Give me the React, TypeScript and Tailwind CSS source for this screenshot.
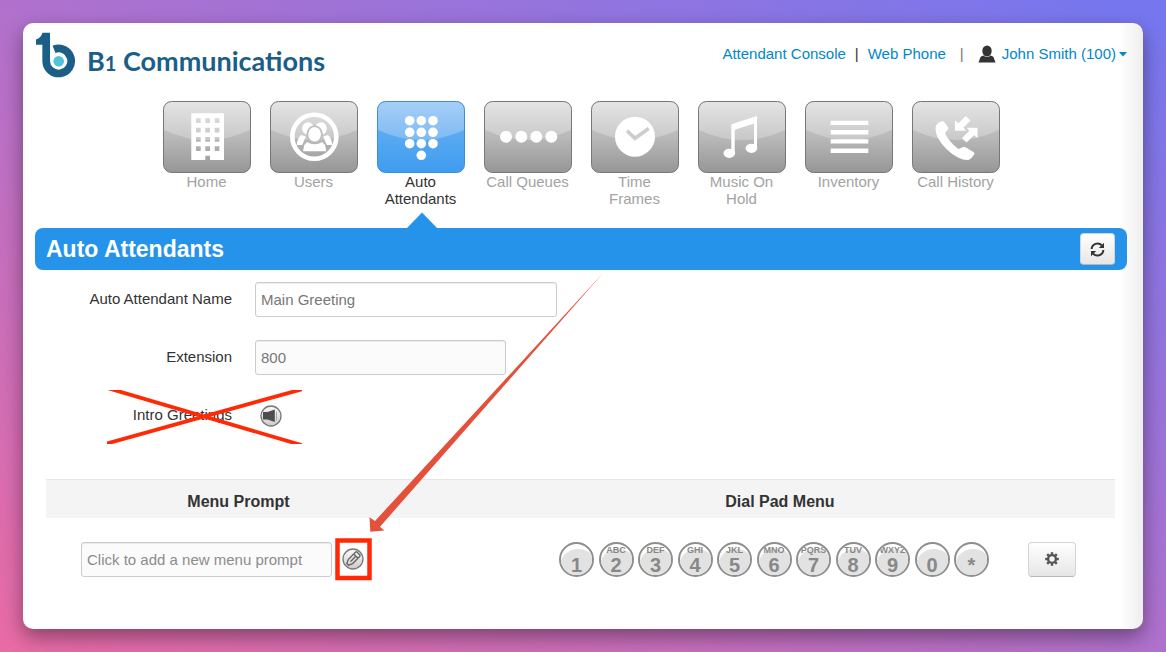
import React from "react";

type NavKey =
  | "home"
  | "users"
  | "attendants"
  | "queues"
  | "frames"
  | "music"
  | "inventory"
  | "history";

const NAV_ITEMS: { key: NavKey; label: string }[] = [
  { key: "home", label: "Home" },
  { key: "users", label: "Users" },
  { key: "attendants", label: "Auto Attendants" },
  { key: "queues", label: "Call Queues" },
  { key: "frames", label: "Time Frames" },
  { key: "music", label: "Music On Hold" },
  { key: "inventory", label: "Inventory" },
  { key: "history", label: "Call History" },
];

const DIAL_KEYS = [
  { digit: "1", letters: "" },
  { digit: "2", letters: "ABC" },
  { digit: "3", letters: "DEF" },
  { digit: "4", letters: "GHI" },
  { digit: "5", letters: "JKL" },
  { digit: "6", letters: "MNO" },
  { digit: "7", letters: "PQRS" },
  { digit: "8", letters: "TUV" },
  { digit: "9", letters: "WXYZ" },
  { digit: "0", letters: "" },
  { digit: "*", letters: "" },
];

const INPUT_CLASS =
  "h-[35px] rounded-[3px] border border-[#cccccc] px-[5px] text-[15px] text-[#777777] placeholder:text-[#8c8c8c] shadow-[inset_0_1px_1px_rgba(0,0,0,0.07)]";

const BUTTON_CLASS =
  "flex items-center justify-center rounded-[4px] border border-[#d5d5d5] border-b-[#b8b8b8] bg-linear-to-b from-white to-[#e6e6e6]";

const windowPath = [17.3, 26.7, 36, 45.3]
  .flatMap((y) => [33, 42.3, 51.7].map((x) => `M${x} ${y}h4.7v4.7h-4.7z`))
  .join("");

const GLYPHS: Record<NavKey, React.ReactNode> = {
  home: (
    <path
      fillRule="evenodd"
      d={`M28.3 12.3H61V59H47V54.7H42.3V59H28.3z${windowPath}`}
    />
  ),
  users: (
    <>
      <circle cx="44.3" cy="35.7" r="22" fill="none" stroke="#fff" strokeWidth="4.6" />
      <ellipse cx="38" cy="27.5" rx="5.8" ry="6.2" />
      <ellipse cx="51" cy="27.5" rx="5.8" ry="6.2" />
      <path d="M31 34L35.8 35.5 32.2 44H26.7Q27.5 37 31 34z" />
      <path d="M58 34L53.2 35.5 56.800 44H62.300Q61.500 37 58 34z" />
      <ellipse cx="44.6" cy="33.3" rx="7.3" ry="8.2" stroke="#bdbdbd" strokeWidth="1.8" />
      <path d="M37 41Q44.6 45.5 52.3 41L55 44 56.3 50.3H33L34.3 44z" />
    </>
  ),
  attendants: (
    <>
      {[19.7, 31.3, 42.7].map((y) =>
        [32.7, 44.3, 56].map((x) => <circle key={`${x}-${y}`} cx={x} cy={y} r="4.8" />),
      )}
      <circle cx="44.3" cy="54.3" r="4.8" />
    </>
  ),
  queues: (
    <>
      {[22, 37.3, 52.3, 67.3].map((x) => (
        <circle key={x} cx={x} cy="35.7" r="6" />
      ))}
    </>
  ),
  frames: (
    <>
      <circle cx="44" cy="35.7" r="20" />
      <path d="M36 29.7L44 37.3 57.7 27.5" fill="none" stroke="#cdcdcd" strokeWidth="3.6" />
    </>
  ),
  music: (
    <>
      <path d="M33.3 23.3L59 15V47.5H56V22.5L36.7 28.8V52.5H33.3z" />
      <ellipse cx="31.3" cy="52.3" rx="5.8" ry="4.6" />
      <ellipse cx="53.4" cy="47.3" rx="5.8" ry="4.6" />
    </>
  ),
  inventory: (
    <path d="M25.7 19.7h37.6v4.4H25.7zM25.7 29h37.6v4.4H25.7zM25.7 38.2h37.6v4.4H25.7zM25.7 47.5h37.6v4.4H25.7z" />
  ),
  history: (
    <>
      <path d="M23.7 25.5Q25 21.5 30 20.3Q31.5 20 32.5 21.5L36.2 26.5Q36.8 27.8 35.8 28.8L33 32Q36 40 46.5 48L50.5 46.2Q52 45.5 53.5 46.3L61.5 51Q63 52 62.3 53.3Q60 57.5 56.5 59Q52 59.500 46 56.500Q33 49.500 26 37Q23 30.500 23.700 25.500z" />
      <path d="M53.7 15L58.5 19.5 51.5 26.5 54 29.7H43V19.5L46.5 22.3z" />
      <path d="M65.5 26.8V37L62 34.2 54.5 41.5 50 37 57.3 29.8 54.7 26.8z" />
    </>
  ),
};

const NavTile = ({ type, active }: { type: NavKey; active: boolean }) => (
  <svg viewBox="0 0 88 72" className="block h-[72px] w-[88px]" fill="#fff" aria-hidden="true">
    <defs>
      <linearGradient id={`base-${type}`} x1="0" y1="0" x2="0" y2="1">
        <stop offset="0" stopColor={active ? "#6db4f3" : "#cccccc"} />
        <stop offset="0.5" stopColor={active ? "#57a9f1" : "#b9b9b9"} />
        <stop offset="1" stopColor={active ? "#3f9cef" : "#969696"} />
      </linearGradient>
      <linearGradient id={`gloss-${type}`} x1="0" y1="0" x2="0" y2="1">
        <stop offset="0" stopColor={active ? "#a6cff7" : "#e4e4e4"} />
        <stop offset="1" stopColor={active ? "#7ebaf3" : "#c8c8c8"} />
      </linearGradient>
    </defs>
    <rect x="0.5" y="0.5" width="87" height="71" rx="8" fill={`url(#base-${type})`} />
    <path d="M1 29V9Q1 1 9 1H79Q87 1 87 9V29Q44 49 1 29z" fill={`url(#gloss-${type})`} />
    <rect
      x="0.5"
      y="0.5"
      width="87"
      height="71"
      rx="8"
      fill="none"
      stroke={active ? "#3d8fd9" : "#777777"}
    />
    {GLYPHS[type]}
  </svg>
);

const Logo = () => (
  <a href="#" className="flex items-center gap-[11px] text-[#1b5e86]">
    <svg viewBox="0 0 41 46" className="h-[46px] w-[41px]" aria-hidden="true">
      <path
        d="M11.2 4V29.2A12.5 12.5 0 1 0 19 17.4"
        fill="none"
        stroke="currentColor"
        strokeWidth="7.7"
      />
      <path d="M1 7.5Q6 6 7.5 0.8H15V12.7H1z" fill="currentColor" />
      <circle cx="23.7" cy="29.2" r="5.3" fill="#4fc3d9" />
    </svg>
    <span className="pt-[15px] font-['Lato'] text-[27px] leading-[30px] font-bold">
      B<span className="text-[20px]">1</span> Communications
    </span>
  </a>
);

const AccountMenu = () => (
  <div className="flex items-center pt-[21px] text-[15px] leading-5 text-[#0088cc]">
    <a href="#">Attendant Console</a>
    <span className="px-[9px] text-[#333333]">|</span>
    <a href="#">Web Phone</a>
    <span className="px-[14px] text-[#777777]">|</span>
    <button type="button" className="flex items-center">
      <svg viewBox="0 0 18 18" className="mr-[6px] size-[18px]" fill="#333333" aria-hidden="true">
        <ellipse cx="9" cy="6" rx="4.7" ry="5.5" />
        <path d="M0.5 17.5L2.5 12Q4 10.5 5.5 10.5Q9 13.5 12.5 10.5Q14 10.5 15.5 12L17.5 17.5z" />
      </svg>
      John Smith (100)
      <svg viewBox="0 0 8 5" className="ml-[3px] h-[5px] w-2" fill="currentColor" aria-hidden="true">
        <path d="M0 0H8L4 4.5z" />
      </svg>
    </button>
  </div>
);

const RefreshIcon = () => (
  <svg viewBox="0 0 15 15" className="size-[15px]" aria-hidden="true">
    <path
      d="M1.6 7A6 6 0 0 1 11.8 3.2M13.4 8A6 6 0 0 1 3.2 11.8"
      fill="none"
      stroke="currentColor"
      strokeWidth="2"
    />
    <path d="M14 0.8V6H8.8zM1 14.2V9H6.2z" fill="currentColor" />
  </svg>
);

const GearIcon = () => (
  <svg viewBox="0 0 14 14" className="size-[14px]" aria-hidden="true">
    <circle cx="7" cy="7" r="3.9" fill="none" stroke="currentColor" strokeWidth="2.4" />
    {[0, 45, 90, 135, 180, 225, 270, 315].map((angle) => (
      <rect
        key={angle}
        x="5.8"
        y="0.2"
        width="2.4"
        height="2.4"
        fill="currentColor"
        transform={`rotate(${angle} 7 7)`}
      />
    ))}
  </svg>
);

const RoundIcon = ({ children }: { children: React.ReactNode }) => (
  <svg viewBox="0 0 22 22" className="block size-[22px]" aria-hidden="true">
    <defs>
      <linearGradient id="round-fill" x1="0" y1="0" x2="0" y2="1">
        <stop offset="0" stopColor="#fafafa" />
        <stop offset="1" stopColor="#cccccc" />
      </linearGradient>
    </defs>
    <circle cx="11" cy="11" r="10" fill="url(#round-fill)" stroke="#777777" strokeWidth="1.3" />
    {children}
  </svg>
);

const DialKey = ({ digit, letters }: { digit: string; letters: string }) => (
  <button
    type="button"
    aria-label={`Dial ${digit}`}
    className="relative flex size-[35px] flex-col items-center justify-end overflow-hidden rounded-full border-2 border-[#8e8e8e] bg-white font-bold text-[#888888]"
  >
    <svg viewBox="0 0 31 31" className="absolute inset-0 size-full" aria-hidden="true">
      <path d="M0 17C3 8 11 5 17 5S28 7 31 12V31H0z" fill="#e2e2e2" />
    </svg>
    {letters && <span className="relative text-[9px] leading-[9px]">{letters}</span>}
    <span className="relative text-[20px] leading-5">{digit}</span>
  </button>
);

// Red marks drawn over the page: crossed-out row, arrow and highlight box
const Annotations = () => (
  <svg
    width="640"
    height="600"
    viewBox="23 23 640 600"
    className="pointer-events-none absolute top-0 left-0"
    aria-hidden="true"
  >
    <clipPath id="cross-clip">
      <rect x="107" y="390" width="195" height="54" />
    </clipPath>
    <g clipPath="url(#cross-clip)" stroke="#ff2a05" strokeWidth="3.8">
      <path d="M104 387L308 447" />
      <path d="M310 387L98 446" />
    </g>
    <path
      d="M604 272L375 521 369.5 517.3 370.3 531.8 384.3 530.6 380 526.7z"
      fill="#e5503b"
    />
    <rect x="337.5" y="540.5" width="32" height="37.5" fill="none" stroke="#ff2a05" strokeWidth="4.5" />
  </svg>
);

const GreetingForm = () => (
  <form className="grid grid-cols-[197px_1fr] items-center gap-[23px] pt-3 text-[15px] text-[#333333]">
    <label htmlFor="aa-name" className="text-right">
      Auto Attendant Name
    </label>
    <input id="aa-name" defaultValue="Main Greeting" className={`${INPUT_CLASS} w-[302px] bg-white`} />
    <label htmlFor="aa-ext" className="text-right">
      Extension
    </label>
    <input id="aa-ext" defaultValue="800" className={`${INPUT_CLASS} w-[251px] bg-[#fbfbfb]`} />
    <label htmlFor="aa-intro" className="text-right">
      Intro Greetings
    </label>
    <div className="flex h-[35px] items-center pl-[5px]">
      <button id="aa-intro" type="button" aria-label="Intro Greetings">
        <RoundIcon>
          <path d="M3 7H7.5L14.8 4.5V17L7.500 14.500H3z" fill="#4d4d4d" />
          <path d="M16.500 6.500V15.500" stroke="#aaaaaa" />
        </RoundIcon>
      </button>
    </div>
  </form>
);

const MenuTable = () => (
  <div className="pt-[46px] pr-3 pl-[11px]">
    <table className="w-full table-fixed text-[#333333]">
      <thead>
        <tr className="h-[38px] border-t border-[#e6e6e6] bg-[#f4f4f4] text-[16px]">
          <th className="w-[36%] pt-[6px]">Menu Prompt</th>
          <th className="pt-[6px] pl-[14px]">Dial Pad Menu</th>
        </tr>
      </thead>
      <tbody>
        <tr>
          <td className="pt-6 pl-[35px]">
            <div className="flex items-center gap-[10px]">
              <input
                aria-label="Menu Prompt"
                placeholder="Click to add a new menu prompt"
                className={`${INPUT_CLASS} w-[251px] bg-[#fbfbfb]`}
              />
              <button type="button" aria-label="Edit menu prompt">
                <RoundIcon>
                  <g transform="rotate(45 11 11)" fill="none" stroke="#666666" strokeWidth="1.4">
                    <path d="M8 4.500Q8 3.300 9.200 3.300H12.800Q14 3.300 14 4.500V14.500L12.200 18.500H9.800L8 14.500zM8 7H14M11 7V14.500" />
                  </g>
                </RoundIcon>
              </button>
            </div>
          </td>
          <td className="pt-6 pr-[39px]">
            <div className="flex items-center justify-end gap-[39px]">
              <div className="flex w-[430px] justify-between">
                {DIAL_KEYS.map((key) => (
                  <DialKey key={key.digit} {...key} />
                ))}
              </div>
              <button
                type="button"
                aria-label="Options"
                className={`${BUTTON_CLASS} h-[35px] w-12 text-[#555555]`}
              >
                <GearIcon />
              </button>
            </div>
          </td>
        </tr>
      </tbody>
    </table>
  </div>
);

export default function App() {
  return (
    <div className="flex min-h-screen bg-[linear-gradient(to_top_right,#e96ba5_0%,#b071cd_50%,#7477f0_100%)] p-[23px] font-['Liberation_Sans',Arial,sans-serif]">
      <main className="relative flex-1 rounded-[10px] bg-white bg-[linear-gradient(to_left,#eeeeee,#ffffff_24px)] pr-4 pb-[52px] pl-3 shadow-[0_8px_20px_rgba(0,0,0,0.4)]">
        <header className="flex h-[78px] items-start justify-between">
          <div className="pt-2">
            <Logo />
          </div>
          <AccountMenu />
        </header>

        <nav className="flex justify-center gap-[19px]">
          {NAV_ITEMS.map(({ key, label }) => {
            const active = key === "attendants";
            return (
              <a
                key={key}
                href="#"
                className={`relative w-[88px] pb-[21px] text-center text-[15px] leading-[17px] ${
                  active ? "text-[#333333]" : "text-[#a3a3a3]"
                }`}
              >
                <NavTile type={key} active={active} />
                <span className="block px-[2px]">{label}</span>
                {active && (
                  <svg
                    viewBox="0 0 30 16"
                    className="absolute bottom-0 left-[30px] h-4 w-[30px]"
                    fill="#2693eb"
                    aria-hidden="true"
                  >
                    <path d="M0 16L15 0.5 30 16z" />
                  </svg>
                )}
              </a>
            );
          })}
        </nav>

        <div className="flex h-[42px] items-center justify-between rounded-lg bg-[#2693eb] pr-3 pl-[11px]">
          <h1 className="text-[23px] leading-7 font-bold text-white">Auto Attendants</h1>
          <button
            type="button"
            aria-label="Refresh"
            className={`${BUTTON_CLASS} h-8 w-[35px] text-[#333333]`}
          >
            <RefreshIcon />
          </button>
        </div>

        <GreetingForm />
        <MenuTable />
        <Annotations />
      </main>
    </div>
  );
}
